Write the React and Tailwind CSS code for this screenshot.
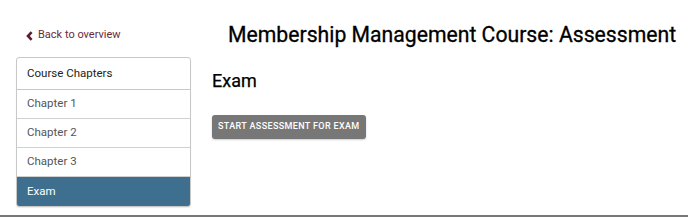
import React from "react";

const chapters = ["Chapter 1", "Chapter 2", "Chapter 3", "Exam"];

const App = () => {
  const active = "Exam";

  return (
    <div className="h-[217px] w-[688px] bg-white flex flex-col font-['Roboto','Liberation_Sans',sans-serif] overflow-hidden">
      <div className="flex flex-1">
        <aside className="w-[175px] ml-4 shrink-0">
          <a
            href="#"
            className="flex items-center gap-[5px] h-[57px] pl-[10px] pt-[14px] text-[11px] text-[#6b2a3c]"
          >
            <svg width="7" height="10" viewBox="0 0 7 10" className="mt-[1px]">
              <path d="M5.6 1.2 L2 5 L5.6 8.8" fill="none" stroke="#5a1f30" strokeWidth="2.6" />
            </svg>
            Back to overview
          </a>
          <div className="border border-[#c8c8c8] rounded-[3px] overflow-hidden shadow-[0_1px_1px_rgba(0,0,0,0.08)]">
            <div className="h-[32px] flex items-center px-[10px] text-[11.5px] text-[#222] border-b border-[#c8c8c8]">
              Course Chapters
            </div>
            {chapters.map((c) => (
              <div
                key={c}
                className={
                  c === active
                    ? "h-[29px] flex items-center px-[10px] text-[11.5px] bg-[#3f6f8e] text-white"
                    : "h-[29px] flex items-center px-[10px] text-[11.5px] text-[#555] border-b border-[#d0d0d0]"
                }
              >
                {c}
              </div>
            ))}
          </div>
        </aside>
        <main className="flex-1 pl-[21px]">
          <h1 className="h-[70px] pt-[20px] pl-[16px] text-[21.2px] text-black leading-[30px] [-webkit-text-stroke:0.3px_black]">
            Membership Management Course: Assessment
          </h1>
          <h2 className="text-[18px] text-black leading-[22px] [-webkit-text-stroke:0.25px_black]">Exam</h2>
          <button
            type="button"
            className="mt-[23px] h-[24px] px-[6px] rounded-[3px] bg-[#777] text-white text-[9px] font-medium tracking-[0.04em] uppercase shadow-[0_1px_2px_rgba(0,0,0,0.2)]"
          >
            Start Assessment for Exam
          </button>
        </main>
      </div>
      <div className="h-[2px] bg-[#777]"></div>
    </div>
  );
};

export default App;
